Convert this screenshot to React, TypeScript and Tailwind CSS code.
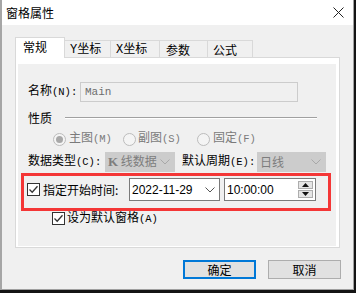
import React from "react";

const F = "font-['Liberation_Mono','Noto_Sans_CJK_SC',monospace]";
const UI = "font-['Noto_Sans_CJK_SC','Liberation_Sans',sans-serif]";

function Check() {
  return (
    <div className="w-[13px] h-[13px] border border-[#333] bg-white flex items-center justify-center shrink-0">
      <svg width="11" height="11" viewBox="0 0 11 11">
        <path d="M1.5 5.5 L4.2 8.2 L9.5 2.2" fill="none" stroke="#333" strokeWidth="1.3" />
      </svg>
    </div>
  );
}

function Chevron({ color }: { color: string }) {
  return (
    <svg width="10" height="6" viewBox="0 0 10 6" className="shrink-0">
      <path d="M0.5 0.5 L5 5 L9.5 0.5" fill="none" stroke={color} strokeWidth="1" />
    </svg>
  );
}

function Radio({ checked }: { checked?: boolean }) {
  return (
    <div className="w-[13px] h-[13px] rounded-full border border-[#bcbcbc] bg-[#f4f4f4] flex items-center justify-center shrink-0">
      {checked && <div className="w-[7px] h-[7px] rounded-full bg-[#a8a8a8]" />}
    </div>
  );
}

export default function App() {
  return (
    <div className="w-[356px] h-[293px] bg-[#141414] overflow-hidden">
      <div className="w-[354px] h-[290px] bg-[#f0f0f0] border-l-2 border-r border-b border-l-[#a6a6a6] border-r-[#a0a0a0] border-b-[#a0a0a0] flex flex-col">
        {/* title bar */}
        <div className="h-[25px] bg-white flex items-center justify-between pl-[4px] pr-[9px] shrink-0">
          <span className={`${UI} text-[12px] leading-none text-black`}>窗格属性</span>
          <svg width="11" height="11" viewBox="0 0 11 11">
            <path d="M0.5 0.5 L10.5 10.5 M10.5 0.5 L0.5 10.5" stroke="#222" strokeWidth="1" />
          </svg>
        </div>

        {/* content */}
        <div className="pl-[13px] pt-[12px] flex flex-col">
          {/* tabs */}
          <div className="flex items-end h-[21px] -mb-[1px] whitespace-nowrap">
            <div className={`relative z-10 w-[50px] h-[21px] bg-white border border-b-0 border-[#d9d9d9] flex items-center pl-[7px] pb-[2px] ${UI} text-[12px] leading-none`}>常规</div>
            <div className={`w-[46px] h-[18px] border border-l-0 border-b-0 border-[#d9d9d9] flex items-center pl-[5px] ${F} text-[12px] leading-none`}>Y坐标</div>
            <div className={`w-[49px] h-[18px] border border-l-0 border-b-0 border-[#d9d9d9] flex items-center pl-[5px] ${F} text-[12px] leading-none`}>X坐标</div>
            <div className={`w-[48px] h-[18px] border border-l-0 border-b-0 border-[#d9d9d9] flex items-center pl-[6px] ${UI} text-[12px] leading-none`}>参数</div>
            <div className={`w-[45px] h-[18px] border border-l-0 border-b-0 border-[#d9d9d9] flex items-center pl-[5px] ${UI} text-[12px] leading-none`}>公式</div>
          </div>

          {/* panel */}
          <div className="w-[325px] h-[191px] border border-[#d9d9d9] bg-white pl-[2px] pr-[3px] pt-[6px] pb-[1px]">
            <div className={`h-full bg-[#f0f0f0] flex flex-col whitespace-nowrap ${F} text-[12px] leading-none text-black`}>
              {/* name row */}
              <div className="mt-[18px] h-[20px] flex items-center pl-[10px]">
                <span className="w-[52px] shrink-0">名称<span className="text-[10.5px]">(N):</span></span>
                <div className="w-[218px] h-[20px] border border-[#cccccc] bg-[#f0f0f0] flex items-center pl-[4px] text-[#6d6d6d] text-[11px]">Main</div>
              </div>

              {/* 性质 */}
              <div className="mt-[9px] h-[14px] flex items-center pl-[10px]">
                <span className={`${UI} w-[37px] shrink-0`}>性质</span>
                <div className="w-[252px] h-[2px] bg-[#a0a0a0] border-b border-white" />
              </div>

              {/* radios */}
              <div className="mt-[7px] h-[14px] flex items-center pl-[35px] text-[#7a7a7a]">
                <Radio checked />
                <span className="ml-[3px] w-[54px] shrink-0">主图<span className="text-[10.5px]">(M)</span></span>
                <Radio />
                <span className="ml-[2px] w-[59px] shrink-0">副图<span className="text-[10.5px]">(S)</span></span>
                <Radio />
                <span className="ml-[3px]">固定<span className="text-[10.5px]">(F)</span></span>
              </div>

              {/* data type */}
              <div className="mt-[6px] h-[20px] flex items-center pl-[10px]">
                <span className="w-[77px] shrink-0">数据类型<span className="text-[10.5px]">(C):</span></span>
                <div className="w-[70px] h-[20px] shrink-0 bg-[#cccccc] flex items-center justify-between pl-[3px] pr-[5px] text-[#7d7d7d]">
                  <span><span className="font-['Liberation_Serif',serif] font-bold text-[13px]">K</span><span className={UI}> 线数据</span></span>
                  <Chevron color="#a8a8a8" />
                </div>
                <span className="ml-[7px] w-[75px] shrink-0">默认周期<span className="text-[10.5px]">(E):</span></span>
                <div className="w-[69px] h-[20px] shrink-0 bg-[#cccccc] flex items-center justify-between pl-[3px] pr-[5px] text-[#7d7d7d]">
                  <span className={UI}>日线</span>
                  <Chevron color="#a8a8a8" />
                </div>
              </div>

              {/* red highlighted row */}
              <div className="mt-[1px] ml-[3px] w-[310px] h-[38px] border-[3px] border-[#f43636] flex items-start pt-[2px] pl-[3px]">
                <div className="mt-[5px] w-[102px] shrink-0 flex items-center">
                  <Check />
                  <span className={`ml-[3px] ${UI} text-[12px]`}>指定开始时间:</span>
                </div>
                <div className="w-[91px] h-[23px] shrink-0 border border-[#7a7a7a] bg-white flex items-center justify-between pl-[2px] pr-[4px] font-['Liberation_Sans',sans-serif] text-[12px]">
                  <span>2022-11-29</span>
                  <Chevron color="#555" />
                </div>
                <div className="ml-[4px] w-[92px] h-[23px] shrink-0 border border-[#7a7a7a] bg-white flex items-center justify-between pl-[2px] pr-[2px] font-['Liberation_Sans',sans-serif] text-[12px]">
                  <span>10:00:00</span>
                  <div className="flex flex-col gap-[1px]">
                    <div className="w-[15px] h-[8px] bg-[#e5e5e5] border border-[#adadad] flex items-center justify-center">
                      <svg width="7" height="4" viewBox="0 0 7 4"><path d="M0 4 L3.5 0 L7 4 Z" fill="#111" /></svg>
                    </div>
                    <div className="w-[15px] h-[8px] bg-[#e5e5e5] border border-[#adadad] flex items-center justify-center">
                      <svg width="7" height="4" viewBox="0 0 7 4"><path d="M0 0 L3.5 4 L7 0 Z" fill="#111" /></svg>
                    </div>
                  </div>
                </div>
              </div>

              {/* default pane */}
              <div className="mt-[1px] h-[13px] flex items-center pl-[34px]">
                <Check />
                <span className="ml-[2px]">设为默认窗格<span className="text-[10.5px]">(A)</span></span>
              </div>
            </div>
          </div>

          {/* buttons */}
          <div className="mt-[12px] flex justify-end gap-[12px] pr-[12px]">
            <div className={`w-[73px] h-[19px] border-2 border-[#0078d7] bg-[#e1e1e1] flex items-center justify-center ${UI} text-[12px] leading-none`}>确定</div>
            <div className={`w-[73px] h-[19px] border border-[#adadad] bg-[#e1e1e1] flex items-center justify-center ${UI} text-[12px] leading-none`}>取消</div>
          </div>
        </div>
      </div>
    </div>
  );
}
